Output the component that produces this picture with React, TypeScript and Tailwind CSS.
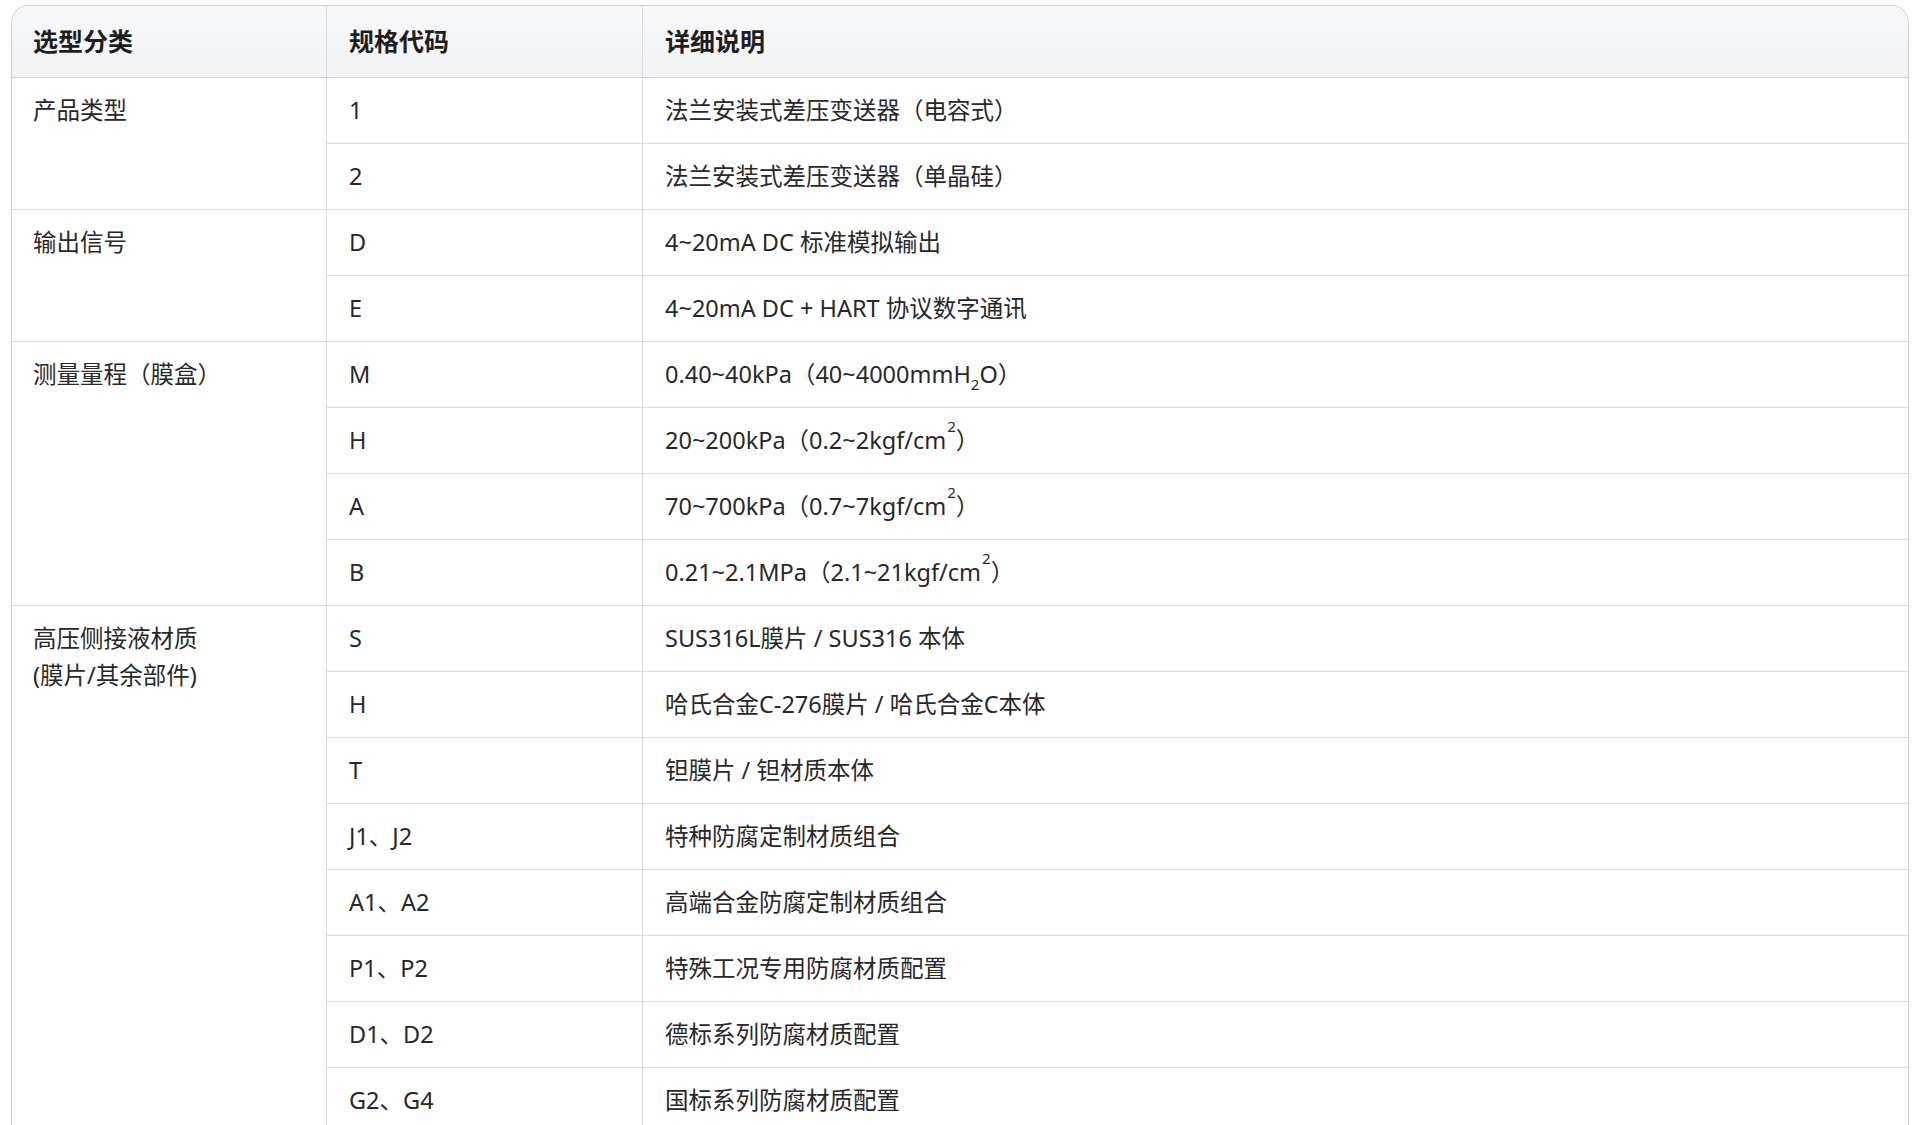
import React from 'react';

type Group = {
  label: React.ReactNode;
  rows: { code: string; desc: React.ReactNode }[];
};

const sup = <sup className="text-[15px] align-[9px] ml-[1px]">2</sup>;

const groups: Group[] = [
  {
    label: '产品类型',
    rows: [
      { code: '1', desc: '法兰安装式差压变送器（电容式）' },
      { code: '2', desc: '法兰安装式差压变送器（单晶硅）' },
    ],
  },
  {
    label: '输出信号',
    rows: [
      { code: 'D', desc: '4~20mA DC 标准模拟输出' },
      { code: 'E', desc: '4~20mA DC + HART 协议数字通讯' },
    ],
  },
  {
    label: '测量量程（膜盒）',
    rows: [
      { code: 'M', desc: <>0.40~40kPa（40~4000mmH<sub className="text-[15px] align-[-3px]">2</sub>O）</> },
      { code: 'H', desc: <>20~200kPa（0.2~2kgf/cm{sup}）</> },
      { code: 'A', desc: <>70~700kPa（0.7~7kgf/cm{sup}）</> },
      { code: 'B', desc: <>0.21~2.1MPa（2.1~21kgf/cm{sup}）</> },
    ],
  },
  {
    label: (
      <>
        高压侧接液材质
        <br />
        (膜片/其余部件)
      </>
    ),
    rows: [
      { code: 'S', desc: 'SUS316L膜片 / SUS316 本体' },
      { code: 'H', desc: '哈氏合金C-276膜片 / 哈氏合金C本体' },
      { code: 'T', desc: '钽膜片 / 钽材质本体' },
      { code: 'J1、J2', desc: '特种防腐定制材质组合' },
      { code: 'A1、A2', desc: '高端合金防腐定制材质组合' },
      { code: 'P1、P2', desc: '特殊工况专用防腐材质配置' },
      { code: 'D1、D2', desc: '德标系列防腐材质配置' },
      { code: 'G2、G4', desc: '国标系列防腐材质配置' },
    ],
  },
];

const spanClass: Record<number, string> = {
  2: 'row-span-2',
  4: 'row-span-4',
  8: 'row-span-8',
};

function App() {
  return (
    <div
      className="min-h-screen bg-white pl-[11px] pr-[11px] pt-[5px] text-[#282828] overflow-hidden"
      style={{ fontFamily: '"Noto Sans", "Noto Sans CJK SC", sans-serif' }}
    >
      <div className="rounded-t-[18px] border border-b-0 border-[#cfd1d3] overflow-hidden">
        {/* Header */}
        <div className="grid grid-cols-[315px_316px_1fr] h-[72px] bg-gradient-to-b from-[#f7f8f9] to-[#f1f2f4] border-b border-[#cfd1d4] text-[25px] font-bold text-[#1e1e1e]">
          <div className="flex items-center pl-[21px] border-r border-[#dcdde0]">选型分类</div>
          <div className="flex items-center pl-[22px] border-r border-[#dcdde0]">规格代码</div>
          <div className="flex items-center pl-[22px]">详细说明</div>
        </div>

        {/* Body */}
        <div className="grid grid-cols-[315px_316px_1fr] auto-rows-[66px] text-[23.5px]">
          {groups.map((g, gi) => (
            <React.Fragment key={gi}>
              <div
                className={`${spanClass[g.rows.length]} col-start-1 border-r border-b border-[#d8d9dc] pl-[21px] pt-[14px] leading-[37px]`}
              >
                {g.label}
              </div>
              {g.rows.map((r, ri) => (
                <React.Fragment key={ri}>
                  <div className="col-start-2 flex items-center pl-[22px] border-r border-b border-[#d8d9dc]">
                    {r.code}
                  </div>
                  <div className="col-start-3 flex items-center pl-[22px] border-b border-[#d8d9dc]">
                    <span>{r.desc}</span>
                  </div>
                </React.Fragment>
              ))}
            </React.Fragment>
          ))}
        </div>
      </div>
    </div>
  );
}

export default App;
